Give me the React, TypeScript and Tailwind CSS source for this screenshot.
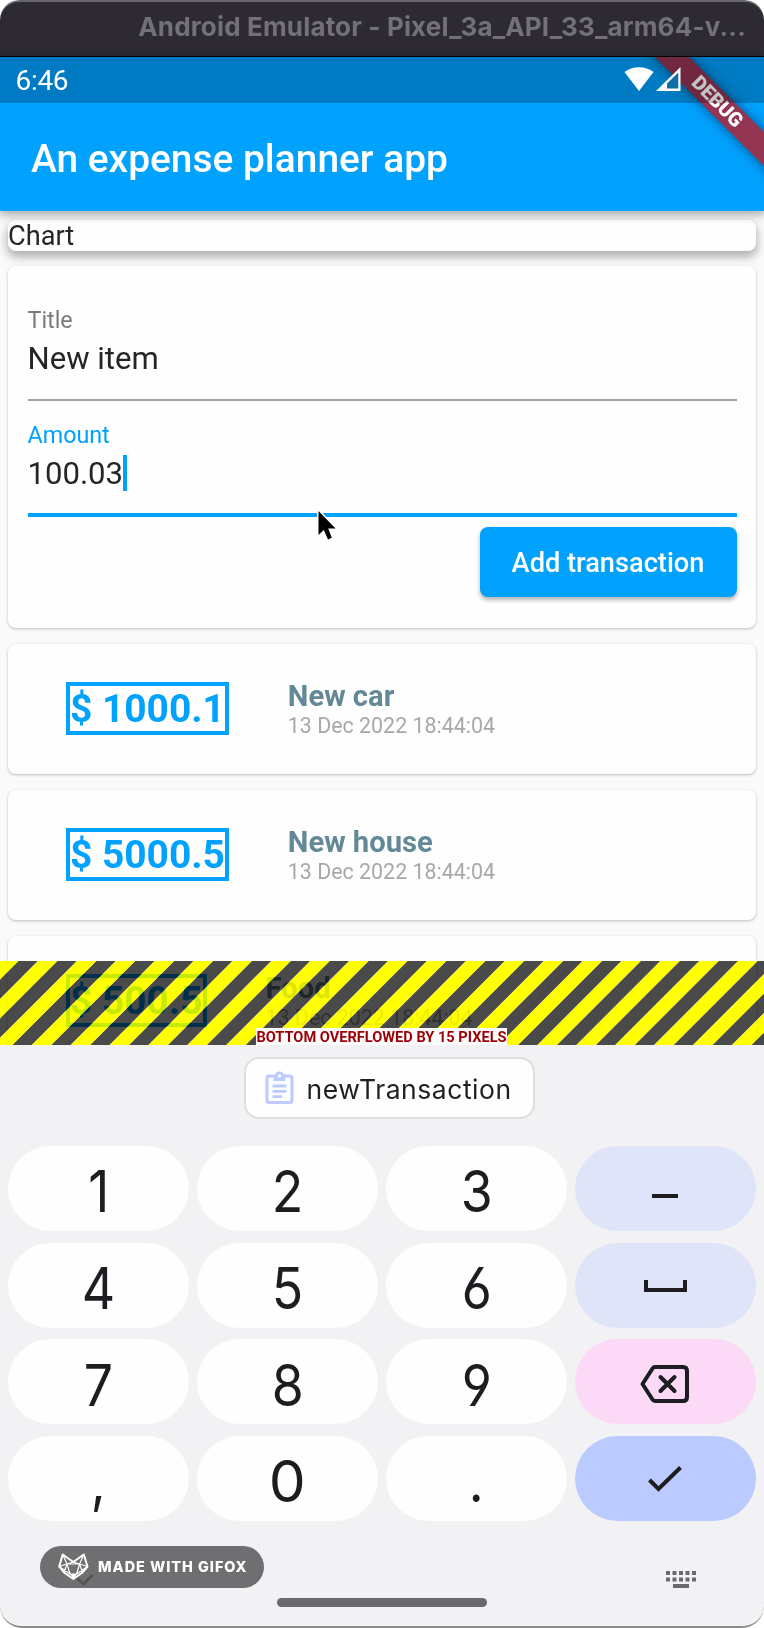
import React from "react";

type Transaction = { amount: string; title: string; date: string };

const transactions: Transaction[] = [
  { amount: "$ 1000.1", title: "New car", date: "13 Dec 2022 18:44:04" },
  { amount: "$ 5000.5", title: "New house", date: "13 Dec 2022 18:44:04" },
  { amount: "$ 500.5", title: "Food", date: "13 Dec 2022 18:44:04" },
];

function TitleBar() {
  return (
    <div className="flex h-[57px] shrink-0 items-start justify-end rounded-t-[20px] border-t-2 border-b border-t-[#68666b] border-b-black bg-[#2d2a33] pr-[18px]">
      <span className="pt-[7px] font-['Inter'] text-[26px] leading-[36px] font-bold tracking-[0.16px] whitespace-nowrap text-[#737078]">
        Android Emulator - Pixel_3a_API_33_arm64-v...
      </span>
    </div>
  );
}

function StatusBar() {
  return (
    <div className="relative z-20 flex h-[46px] items-center justify-between bg-black/23 pl-[15.500px] text-white">
      <span className="pt-[2px] text-[28px] leading-[44px] tracking-[-0.3px]">6:46</span>
      <svg className="absolute top-0 left-[620px]" width="66" height="46" viewBox="620 57 66 46">
        <path d="M639 91 L624.500 72 C632 65.500 646 65.500 653.500 72 Z" fill="#fff" />
        <path d="M656 91 L680.500 67 V91 Z" fill="#fff" />
        <path d="M667 83.500 L678.300 72.500 V88.500 H667 Z" fill="#0d6fa6" />
      </svg>
    </div>
  );
}

function DebugRibbon() {
  return (
    <div className="absolute top-[33px] left-[607px] z-10 flex h-[24px] w-[220px] rotate-45 items-center justify-center bg-[#933553] shadow-[0_0_12px_rgba(0,0,0,0.5)]">
      <span className="text-[19.8px] leading-[24px] font-black text-white">DEBUG</span>
    </div>
  );
}

function AppBar() {
  return (
    <header className="relative z-10 shrink-0 bg-[#01a1fe] shadow-[0_3px_9px_1px_rgba(0,0,0,0.32)]">
      <div className="relative h-[154px] overflow-hidden">
        <DebugRibbon />
        <StatusBar />
        <h1 className="pl-[31px] text-[38.9px] leading-[111px] font-medium text-white">
          An expense planner app
        </h1>
      </div>
    </header>
  );
}

function Cursor() {
  return (
    <svg className="absolute top-[242px] left-[306px] z-10" width="28" height="38" viewBox="0 0 28 38">
      <path
        d="M4.500 3 V27 L9.800 22 L14 31.500 L17.800 29.800 L14.200 20.500 H21.500 Z"
        fill="#000"
        stroke="#fff"
        strokeWidth="3"
        strokeLinejoin="round"
        paintOrder="stroke"
      />
    </svg>
  );
}

function TransactionForm() {
  return (
    <section className="relative mx-2 mt-[15.500px] h-[362px] shrink-0 rounded-[8px] bg-[#fefefe] px-[19.500px] pt-[40px] shadow-[0_1px_3px_rgba(0,0,0,0.25)]">
      <label className="block text-[23.3px] leading-[28px] text-[#7b7b7b]">Title</label>
      <div className="mt-[7px] text-[31.1px] leading-[36px] text-[#252525]">New item</div>
      <div className="mt-[22px] h-[2px] bg-[#a2a2a2]" />
      <label className="mt-[20px] block text-[23.3px] leading-[28px] text-[#01a1fe]">Amount</label>
      <div className="mt-[6px] flex h-[36px] items-center text-[31.1px] leading-[36px] text-[#252525]">
        <span className="pt-[1px]">100.03</span>
        <span className="h-[36px] w-[4px] bg-[#01a1fe]" />
      </div>
      <div className="mt-[22px] h-[4px] bg-[#01a1fe]" />
      <div className="mt-[9.500px] flex justify-end">
        <button className="h-[70px] w-[257px] rounded-[8px] bg-[#01a1fe] pt-[3px] text-[27.2px] font-medium text-white shadow-[0_3px_4px_rgba(0,0,0,0.3)]">
          Add transaction
        </button>
      </div>
      <Cursor />
    </section>
  );
}

function TransactionCard({ amount, title, date }: Transaction) {
  return (
    <li className="mx-2 flex h-[130px] shrink-0 rounded-[8px] bg-[#fefefe] pl-[58px] shadow-[0_1px_3px_rgba(0,0,0,0.25)]">
      <div className="mt-[38px] mr-[59px] flex h-[53px] items-center border-4 border-[#01a1fe] pt-[3px] text-[38.9px] font-bold text-[#01a1fe]">
        {amount}
      </div>
      <div className="mt-[35px]">
        <div className="text-[29.2px] leading-[34px] font-bold text-[#638896]">{title}</div>
        <div className="text-[21.4px] leading-[26px] text-[#a8a8a8]">{date}</div>
      </div>
    </li>
  );
}

const STRIPE_PERIOD = 38.9;
const stripeStarts = Array.from({ length: 23 }, (_, i) => 18.5 + STRIPE_PERIOD * i);

function band(x: number, width: number) {
  return `M${x} 0 h${width} l-84 84 h${-width} Z`;
}

function OverflowBanner() {
  return (
    <div className="absolute top-[961px] left-0 h-[84px] w-full">
      <svg className="absolute inset-0" width="764" height="84" viewBox="0 0 764 84">
        {stripeStarts.map((x) => (
          <React.Fragment key={x}>
            <path d={band(x, 19.45)} fill="#000" fillOpacity="0.71" />
            <path d={band(x - 19.45, 19.45)} fill="#fff" fillOpacity="0.78" />
          </React.Fragment>
        ))}
      </svg>
      <svg className="absolute inset-0 mix-blend-multiply" width="764" height="84" viewBox="0 0 764 84">
        {stripeStarts.map((x) => (
          <path key={x} d={band(x - 19.45, 19.45)} fill="#ff0" />
        ))}
      </svg>
      <div className="absolute bottom-0 left-[256px] flex h-[17px] w-[251px] items-center justify-center bg-[#fdfdfd] pt-[1px] text-[14.6px] leading-[16px] font-bold whitespace-nowrap text-[#9c0006]">
        BOTTOM OVERFLOWED BY 15 PIXELS
      </div>
    </div>
  );
}

const keyBase = "flex h-[85px] items-center justify-center rounded-full text-[#1d1c20]";
const digitFace =
  "pt-[7px] font-['Inter'] text-[57.5px] leading-none scale-x-[0.9] [font-feature-settings:'cv03','cv04']";

function Digit({ children }: { children: string }) {
  return (
    <div className={`${keyBase} bg-[#fefefe]`}>
      <span className={digitFace}>{children}</span>
    </div>
  );
}

function Keypad() {
  return (
    <div className="mt-[27px] grid grid-cols-4 gap-x-2 gap-y-[11.700px] px-[8.300px]">
      <Digit>1</Digit>
      <Digit>2</Digit>
      <Digit>3</Digit>
      <div className={`${keyBase} bg-[#e0e4f9]`}>
        <div className="mt-[15px] h-[4px] w-[26px] bg-[#1d1c20]" />
      </div>
      <Digit>4</Digit>
      <Digit>5</Digit>
      <Digit>6</Digit>
      <div className={`${keyBase} bg-[#e0e4f9]`}>
        <div className="mt-[2px] h-[12px] w-[43px] border-x-4 border-b-4 border-[#1d1c20]" />
      </div>
      <Digit>7</Digit>
      <Digit>8</Digit>
      <Digit>9</Digit>
      <div className={`${keyBase} bg-[#fcd9f6]`}>
        <svg className="mt-[4px]" width="50" height="40" viewBox="0 0 50 40" fill="none" stroke="#1d1c20" strokeWidth="4">
          <path d="M15 3 H43 Q47 3 47 7 V33 Q47 37 43 37 H15 Q13.500 37 12.500 35.500 L2.500 20 L12.500 4.500 Q13.500 3 15 3 Z" strokeLinejoin="round" />
          <path d="M20.500 13 L34.500 27 M34.500 13 L20.500 27" strokeLinecap="round" />
        </svg>
      </div>
      <Digit>,</Digit>
      <div className={`${keyBase} bg-[#fefefe]`}>
        <span className="scale-x-[1.02] pt-[7px] font-['Inter'] text-[57.500px] leading-none">0</span>
      </div>
      <Digit>.</Digit>
      <div className={`${keyBase} bg-[#bbcaff]`}>
        <svg width="36" height="28" viewBox="0 0 36 28" fill="none" stroke="#1d1c20" strokeWidth="4">
          <path d="M2.500 15 L11.500 24 L33.500 2.500" />
        </svg>
      </div>
    </div>
  );
}

function SuggestionChip() {
  return (
    <div className="ml-[244px] flex h-[62px] w-[291px] items-center rounded-[15px] border-2 border-[#dedee1] bg-[#fefefe] pl-[18.500px]">
      <svg width="29" height="34" viewBox="0 0 29 34" fill="none" stroke="#bbcaff" strokeWidth="3">
        <rect x="2" y="5" width="25" height="26.500" rx="2" />
        <path d="M8.500 4 H20.500 V10 H8.500 Z" fill="#bbcaff" stroke="none" />
        <circle cx="14.500" cy="5" r="3.200" fill="#fefefe" strokeWidth="2.800" />
        <path d="M7.500 15 H21.500 M7.500 20.300 H21.500 M7.500 25.600 H17" strokeWidth="2.800" />
      </svg>
      <span className="ml-[13px] pt-[2px] font-['Inter'] text-[26.500px] leading-[34px] tracking-[0.530px] text-[#1f1f22]">
        newTransaction
      </span>
    </div>
  );
}

function GifoxBadge() {
  return (
    <div className="absolute top-[501px] left-[40px] flex h-[42px] w-[224px] items-center rounded-full bg-[#6f6f71]">
      <svg className="shrink-0" width="56" height="42" viewBox="40 1546 56 42" fill="none">
        <path d="M77 1578 L83.500 1584 L92.500 1575" stroke="#575256" strokeWidth="3" />
        <g stroke="#fff" strokeLinejoin="round">
          <path
            d="M62.700 1554.500 L73.300 1562 L83.800 1554.500 L87.500 1566.500 L82.500 1572.500 L73.300 1579 L64 1572.500 L59.200 1566.500 Z"
            strokeWidth="2"
          />
          <path
            d="M62.700 1554.500 L67 1564 L59.200 1566.500 L70 1574 L67 1564 H79.600 L76.600 1574 L87.500 1566.500 L79.600 1564 L83.800 1554.500 M67 1564 L73.300 1562 L79.600 1564 M67 1564 L64 1572.500 M79.600 1564 L82.500 1572.500"
            strokeWidth="1.200"
          />
          <path d="M70 1574 H76.600 L73.300 1578 Z" fill="#fff" />
        </g>
      </svg>
      <span className="ml-[2px] font-['Inter'] text-[14.4px] leading-[20px] font-extrabold tracking-[1px] whitespace-nowrap text-white">
        MADE WITH GIFOX
      </span>
    </div>
  );
}

function Keyboard() {
  const columns = [0, 6.5, 13, 19.5, 26];
  return (
    <section className="relative z-10 h-[583px] shrink-0 rounded-b-[22px] border-b-2 border-[#8b8b8c] bg-[#f2f1f4] pt-[12px]">
      <SuggestionChip />
      <Keypad />
      <GifoxBadge />
      <svg className="absolute top-[526px] left-[666px]" width="31" height="18" viewBox="0 0 31 18" fill="#6b696c">
        {columns.map((x) => (
          <React.Fragment key={x}>
            <rect x={x} y="0" width="4" height="4" />
            <rect x={x} y="6.500" width="4" height="4" />
          </React.Fragment>
        ))}
        <rect x="7" y="13" width="16" height="4" />
      </svg>
      <div className="absolute top-[553px] left-[276.500px] h-[9px] w-[210px] rounded-full bg-[#6b696c]" />
    </section>
  );
}

export default function App() {
  return (
    <div className="h-[1628px] w-[764px] overflow-hidden bg-white font-['Roboto',sans-serif]">
      <div className="relative flex h-full flex-col">
        <TitleBar />
        <AppBar />
        <main className="flex h-[834px] shrink-0 flex-col overflow-hidden bg-[#fafafa]">
          <div className="mx-2 mt-[8.500px] h-[31px] shrink-0 rounded-[8px] bg-[#fefefe] text-[27.2px] leading-[33px] text-[#252525] shadow-[0_5px_10px_1px_rgba(0,0,0,0.3)]">
            Chart
          </div>
          <TransactionForm />
          <ul className="mt-[15.500px] flex shrink-0 flex-col gap-[16px]">
            {transactions.map((t) => (
              <TransactionCard key={t.title} {...t} />
            ))}
          </ul>
        </main>
        <OverflowBanner />
        <Keyboard />
      </div>
    </div>
  );
}
